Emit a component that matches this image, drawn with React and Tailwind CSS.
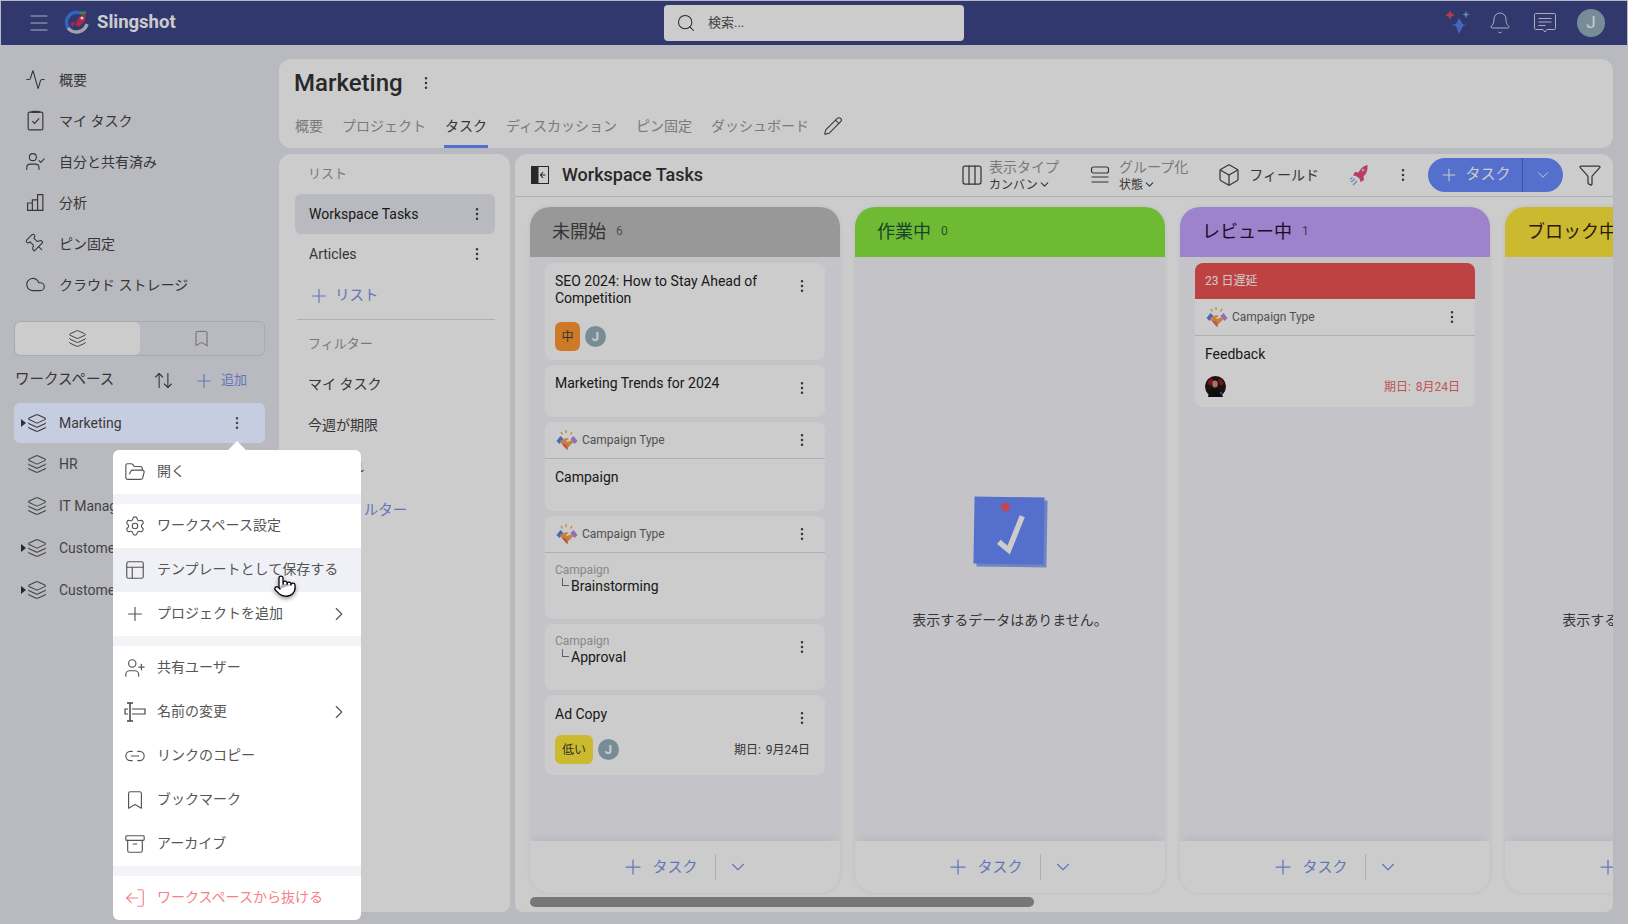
import React from "react";
import {
  Activity, Archive, ArrowUpDown, Bell, Bookmark, Box, ChevronDown, ChevronRight,
  Cloud, Columns3, EllipsisVertical, Filter, FolderOpen, Layers, Link2, LogOut,
  Menu, PanelsTopLeft, Pencil, Pin, Plus, Pointer, Search, Settings, UserCheck, UserPlus,
} from "lucide-react";

const thin = { strokeWidth: 1.25 };

const Logo = () => (
  <svg width="26" height="26" viewBox="0 0 26 26" fill="none">
    <path d="M5 20A10 10 0 0 1 15 3" stroke="#3f7fe8" strokeWidth="3.5" />
    <path d="M15 3l6 0" stroke="#35b26b" strokeWidth="3" />
    <path d="M3 18a11 11 0 0 0 19-4" stroke="#c9ccd6" strokeWidth="3.5" />
    <path d="M10 15l4-8 7-4-1 8-6 6z" fill="#d9335f" />
    <circle cx="17" cy="8" r="1.6" fill="#fff" />
    <path d="M5 14l5-3-2 6z" fill="#d9335f" />
  </svg>
);

const Sparkles = () => (
  <svg width="28" height="26" viewBox="0 0 28 26">
    <path d="M15 8l4 6.5 4 .5-4 1-4 8-3-8-4.5-1 4.500-1z" fill="#5c7de8" />
    <path d="M6 0l1.400 3.600L11 5l-3.600 1.400L6 10 4.600 6.400 1 5l3.600-1.400z" fill="#e24a58" />
    <path d="M22 1l1 2.600 2.600 1-2.600 1-1 2.600-1-2.600-2.600-1 2.600-1z" fill="#6cb1ea" />
  </svg>
);

const ChatIcon = () => (
  <svg width="24" height="22" viewBox="0 0 24 22" fill="none" stroke="currentColor" strokeWidth="1">
    <path d="M2.500 1.500h19a1 1 0 0 1 1 1v14a1 1 0 0 1-1 1h-7.500L12 20l-2-2.500H2.500a1 1 0 0 1-1-1v-14a1 1 0 0 1 1-1z" />
    <path d="M5.500 6.500h13M5.500 10h13M5.500 13.500h7" />
  </svg>
);

const Rocket = () => (
  <svg width="20" height="22" viewBox="0 0 20 22">
    <path d="M18.500 1c.5 5-1 9-4 11.500l.5 3.500-3.500 2-1-3.500-3.500-2.500-3-.5 2-3.500 3.500.5C11 5 14 2 18.500 1z" fill="#e84c82" />
    <circle cx="14" cy="6" r="1.500" fill="#cbcbcb" />
    <path d="M6 15l-4 3M8 17l-4 4M3.500 13.500L1 15.500" stroke="#7fa9ef" strokeWidth="1.200" />
  </svg>
);

const Handshake = () => (
  <svg width="22" height="22" viewBox="0 0 22 22">
    <path d="M10 1v3M5 3l1.500 2.500M16 3l-1.500 2.500" stroke="#f0a93e" strokeWidth="1.300" />
    <path d="M0.500 12l4-5 3 3-4 5z" fill="#5e80e6" />
    <path d="M21.500 12l-4-5-3 3 4 5z" fill="#b48ae8" />
    <path d="M4 12l6-3 3 1-3 2 1 1 5-2 1.500 2-6 6-3-1z" fill="#f7a24d" />
    <path d="M5 14l5 6 2 1-1-5z" fill="#ef6a5e" />
  </svg>
);

const Collapse = () => (
  <svg width="18" height="18" viewBox="0 0 18 18" fill="none">
    <rect x="0.500" y="0.500" width="17" height="17" stroke="#333" />
    <rect x="0.500" y="0.500" width="7" height="17" fill="#333" />
    <path d="M14.500 9H9.500M12 6L9.500 9 12 12" stroke="#333" strokeWidth="1.100" />
  </svg>
);

const RenameIcon = () => (
  <svg width="22" height="20" viewBox="0 0 22 20" fill="none" stroke="#444" strokeWidth="1.200">
    <path d="M6 1v18M3 1h6M3 19h6" strokeWidth="1.500" />
    <path d="M4 7H1v5h3M8 7h13v5H8" />
  </svg>
);

const LeaveIcon = (props) => <LogOut {...props} className="-scale-x-100" />;

const GroupIcon = () => (
  <svg width="20" height="20" viewBox="0 0 20 20" fill="none" stroke="#444" strokeWidth="1.200">
    <rect x="1.500" y="2" width="17" height="6" rx="2" />
    <path d="M1.500 12h17M1.500 17h17" />
  </svg>
);

const ChartIcon = ({ size }) => (
  <svg width={size} height={size} viewBox="0 0 20 20" fill="none" stroke="currentColor" strokeWidth="1.100">
    <path d="M2.500 10.500h4.500v7H2.500zM7 7.500h5v10H7zM12 2.500h5v15h-5z" />
  </svg>
);

const TaskIcon = ({ size }) => (
  <svg width={size} height={size} viewBox="0 0 20 20" fill="none" stroke="currentColor" strokeWidth="1.100">
    <rect x="3" y="2" width="14" height="17" rx="1.500" />
    <path d="M6 1.800h8" strokeWidth="2" />
    <path d="M7 10.500l2.200 2.300L13.500 8" />
  </svg>
);

const PinIcon = (props) => <Pin {...props} className="-rotate-45" />;

const Avatar = ({ small }) => (
  <span
    className={`flex shrink-0 items-center justify-center rounded-full bg-[#96b0be] font-bold text-white ${
      small ? "h-[21px] w-[21px] text-[13px]" : "h-[28px] w-[28px] text-[17px] font-normal"
    }`}
  >
    J
  </span>
);

const Photo = () => (
  <svg width="21" height="21" viewBox="0 0 21 21">
    <circle cx="10.500" cy="10.500" r="10.500" fill="#2a1214" />
    <path d="M2 6l4-4 3 3-4 5zM19 7l-4-5-2 3 3 5z" fill="#8d1f24" />
    <ellipse cx="10" cy="8" rx="2.800" ry="3.500" fill="#c9917c" />
    <path d="M3 21c1-7 4-8 7-8s6 1 8 8z" fill="#111" />
    <circle cx="16" cy="17" r="1" fill="#4f7de0" />
  </svg>
);

const NoteIcon = () => (
  <div className="relative ml-[2px] h-[71px] w-[74px]">
    <div className="absolute left-[3px] top-[3px] h-[67px] w-[70px] rotate-[1deg] bg-[#8ca5f5]" />
    <div className="absolute left-0 top-0 h-[67px] w-[70px] rotate-[1deg] bg-[#6a8cff]">
      <svg width="70" height="67" viewBox="0 0 70 67" fill="none">
        <circle cx="31" cy="10" r="4.500" fill="#f05a6c" />
        <path d="M25 45l10 8 13-34" stroke="#fff" strokeWidth="5.500" />
      </svg>
    </div>
  </div>
);

const navItems = [
  { label: "概要", Icon: Activity },
  { label: "マイ タスク", Icon: TaskIcon },
  { label: "自分と共有済み", Icon: UserCheck },
  { label: "分析", Icon: ChartIcon },
  { label: "ピン固定", Icon: PinIcon },
  { label: "クラウド ストレージ", Icon: Cloud },
];

const workspaces = [
  { name: "HR" },
  { name: "IT Management" },
  { name: "Customer Success", caret: true },
  { name: "Customer Support", caret: true },
];

const tabs = ["概要", "プロジェクト", "タスク", "ディスカッション", "ピン固定", "ダッシュボード"];

const Caret = () => <span className="mr-[1px] h-0 w-0 border-y-[4px] border-l-[5px] border-y-transparent border-l-[#333]" />;

const Dots = ({ className = "" }) => (
  <EllipsisVertical size={16} strokeWidth={1.75} className={`shrink-0 text-[#444] ${className}`} />
);

const Sidebar = () => (
  <aside className="flex w-[278px] shrink-0 flex-col pl-[13px] pr-[14px] pt-[14px]">
    {navItems.map(({ label, Icon }) => (
      <div key={label} className="flex h-[41px] items-center text-sm text-[#444]">
        <span className="flex w-[45px] justify-center pr-[2px]">
          <Icon size={21} {...thin} />
        </span>
        {label}
      </div>
    ))}
    <div className="mt-[16px] flex h-[35px] rounded-md border border-[#d5d6dc]">
      <div className="flex flex-1 items-center justify-center rounded-md bg-white text-[#555]">
        <Layers size={19} {...thin} />
      </div>
      <div className="flex flex-1 items-center justify-center text-[#888]">
        <Bookmark size={19} {...thin} />
      </div>
    </div>
    <div className="mt-[2px] flex h-[45px] items-center text-sm text-[#444]">
      <span className="flex-1 pl-[1px] text-[14.5px]">ワークスペース</span>
      <ArrowUpDown size={21} {...thin} className="mr-[19px]" />
      <span className="flex items-center gap-[6px] pr-[18px] text-[13px] text-[#7c93e8]">
        <Plus size={22} {...thin} />
        追加
      </span>
    </div>
    <div className="relative z-20 flex h-[40px] items-center rounded-md bg-[#c7cde1] pl-[7px] pr-[20px] text-sm text-[#3a3a3a]">
      <Caret />
      <Layers size={20} {...thin} className="mr-[12px]" />
      <span className="flex-1">Marketing</span>
      <Dots />
    </div>
    {workspaces.map((w) => (
      <div key={w.name} className="flex h-[42px] items-center whitespace-nowrap pl-[7px] text-sm text-[#555]">
        {w.caret ? <Caret /> : <span className="w-[6px]" />}
        <Layers size={20} {...thin} className="mr-[12px]" />
        {w.name}
      </div>
    ))}
  </aside>
);

const ListPanel = () => (
  <div className="flex w-[231px] shrink-0 flex-col rounded-t-xl rounded-b-lg bg-white pl-[16px] pr-[15px] text-[13px] text-[#333]">
    <div className="flex h-[40px] items-center pl-[13px] text-[#999]">リスト</div>
    <div className="flex h-[40px] items-center justify-between rounded-md bg-[#e8e9ef] pl-[14px] pr-[10px] text-sm text-[#222]">
      Workspace Tasks
      <Dots />
    </div>
    <div className="flex h-[40px] items-center justify-between pl-[14px] pr-[10px] text-sm text-[#444]">
      Articles
      <Dots />
    </div>
    <div className="flex h-[44px] items-center gap-[5px] pl-[13px] text-[14.5px] text-[#7c93e8]">
      <Plus size={22} {...thin} />
      リスト
    </div>
    <div className="ml-[2px] mt-[1px] h-px bg-[#dcdde2]" />
    <div className="mt-[4px] flex h-[39px] items-center pl-[13px] text-[#999]">フィルター</div>
    <div className="flex h-[41px] items-center pl-[13px] text-sm text-[#444]">マイ タスク</div>
    <div className="flex h-[41px] items-center pl-[13px] text-sm text-[#444]">今週が期限</div>
    <div className="flex h-[41px] items-center pl-[13px] text-sm text-[#444]">期限切れ</div>
    <div className="flex h-[49px] items-center gap-[5px] pl-[13px] text-[14.5px] text-[#7c93e8]">
      <Plus size={22} {...thin} />
      フィルター
    </div>
  </div>
);

const CardType = () => (
  <div className="flex h-[37px] items-center border-b border-[#dcdde2] pl-[11px] pr-[15px] text-xs text-[#666]">
    <Handshake />
    <span className="ml-[4px] flex-1">Campaign Type</span>
    <Dots />
  </div>
);

const SubTitle = ({ name }) => (
  <div className="leading-[15px]">
    <div className="text-xs text-[#aaa]">Campaign</div>
    <div className="flex text-sm leading-[17px] text-[#222]">
      <span className="ml-[7px] mr-[2px] h-[8px] w-[7px] border-b border-l border-[#777]" />
      {name}
    </div>
  </div>
);

const Chip = ({ className, children }) => (
  <span className={`flex h-[29px] items-center justify-center rounded-md text-xs text-[#443] ${className}`}>{children}</span>
);

const FirstColumn = () => (
  <>
    <div className="flex h-[97px] flex-col rounded-lg bg-white pl-[10px] pr-[15px] pt-[10px]">
      <div className="flex text-sm leading-[17px] text-[#222]">
        <div className="flex-1">SEO 2024: How to Stay Ahead of Competition</div>
        <Dots className="mt-[5px]" />
      </div>
      <div className="mt-[15px] flex items-center gap-[5px]">
        <Chip className="w-[25px] bg-[#ff9832]">中</Chip>
        <Avatar small />
      </div>
    </div>
    <div className="flex h-[52px] rounded-lg bg-white pl-[10px] pr-[15px] pt-[10px] text-sm leading-[17px] text-[#222]">
      <div className="flex-1">Marketing Trends for 2024</div>
      <Dots className="mt-[5px]" />
    </div>
    <div className="h-[89px] rounded-lg bg-white">
      <CardType />
      <div className="pl-[10px] pt-[10px] text-sm leading-[17px] text-[#222]">Campaign</div>
    </div>
    <div className="h-[103px] rounded-lg bg-white">
      <CardType />
      <div className="pl-[10px] pt-[9px]">
        <SubTitle name="Brainstorming" />
      </div>
    </div>
    <div className="flex h-[66px] rounded-lg bg-white pl-[10px] pr-[15px] pt-[9px]">
      <div className="flex-1">
        <SubTitle name="Approval" />
      </div>
      <Dots className="mt-[6px]" />
    </div>
    <div className="flex h-[80px] flex-col rounded-lg bg-white pl-[10px] pr-[15px] pt-[11px]">
      <div className="flex text-sm leading-[17px] text-[#222]">
        <div className="flex-1">Ad Copy</div>
        <Dots className="mt-[4px]" />
      </div>
      <div className="mt-[9px] flex items-center gap-[5px]">
        <Chip className="w-[38px] bg-[#fee83b]">低い</Chip>
        <Avatar small />
        <span className="ml-auto text-xs text-[#444] [word-spacing:2px]">期日: 9月24日</span>
      </div>
    </div>
  </>
);

const ReviewColumn = () => (
  <div className="h-[144px] overflow-hidden rounded-lg bg-white">
    <div className="flex h-[36px] items-center bg-[#ef5353] pl-[10px] text-xs text-white">23 日遅延</div>
    <CardType />
    <div className="pl-[10px] pt-[10px] text-sm leading-[17px] text-[#222]">Feedback</div>
    <div className="mt-[13px] flex items-center justify-between pl-[10px] pr-[15px] text-xs text-[#ef6a6a]">
      <Photo />
      <span className="[word-spacing:2px]">期日: 8月24日</span>
    </div>
  </div>
);

const Empty = () => (
  <div className="flex flex-1 flex-col items-center pt-[234px]">
    <NoteIcon />
    <div className="mt-[42px] whitespace-nowrap text-sm text-[#444]">表示するデータはありません。</div>
  </div>
);

const Column = ({ title, count, head, titleColor, countColor, children }) => (
  <div className="flex h-[686px] w-[310px] shrink-0 flex-col overflow-hidden rounded-[20px] bg-[#f5f6fa] shadow-[0_0_4px_rgba(0,0,0,0.08)]">
    <div className={`flex h-[50px] shrink-0 items-center gap-[10px] pb-[2px] pl-[22px] text-[18px] ${head} ${titleColor}`}>
      <span className="whitespace-nowrap">{title}</span>
      <span className={`text-xs ${countColor}`}>{count}</span>
    </div>
    <div className="flex flex-1 flex-col gap-[5px] px-[15px] pt-[6px]">{children}</div>
    <div className="flex h-[52px] shrink-0 items-center justify-center bg-white text-[15px] text-[#7c93e8] shadow-[0_-6px_10px_-4px_rgba(0,0,0,0.08)]">
      <Plus size={24} {...thin} />
      <span className="ml-[7px] pr-[17px]">タスク</span>
      <span className="h-[26px] w-px bg-[#dcdde2]" />
      <ChevronDown size={22} {...thin} className="ml-[11px]" />
    </div>
  </div>
);

const Board = () => (
  <div className="flex min-w-0 flex-1 flex-col overflow-hidden rounded-t-xl rounded-b-lg bg-white">
    <div className="flex h-[43px] shrink-0 items-center border-b border-[#dcdde2] pl-[16px] pr-[11px] text-sm text-[#444]">
      <Collapse />
      <span className="ml-[13px] text-[18px] font-medium text-[#333]">Workspace Tasks</span>
      <Columns3 size={24} {...thin} className="ml-auto" />
      <div className="ml-[5px] flex flex-col leading-[19px]">
        <span className="text-[#999]">表示タイプ</span>
        <span className="flex items-center text-xs">
          カンバン <ChevronDown size={13} />
        </span>
      </div>
      <span className="ml-[31px]">
        <GroupIcon />
      </span>
      <div className="ml-[9px] flex flex-col leading-[19px]">
        <span className="text-[#999]">グループ化</span>
        <span className="flex items-center text-xs">
          状態 <ChevronDown size={13} />
        </span>
      </div>
      <Box size={24} {...thin} className="ml-[29px]" />
      <span className="ml-[8px]">フィールド</span>
      <span className="ml-[30px]">
        <Rocket />
      </span>
      <Dots className="ml-[26px]" />
      <div className="ml-[17px] flex h-[34px] w-[135px] items-center rounded-full bg-[#6a8cff] text-[15px] text-white">
        <span className="flex flex-1 items-center justify-center gap-[6px]">
          <Plus size={20} {...thin} />
          タスク
        </span>
        <span className="flex h-full w-[41px] items-center justify-center border-l border-[#4a68d4]">
          <ChevronDown size={18} {...thin} />
        </span>
      </div>
      <Filter size={24} {...thin} className="ml-[15px]" />
    </div>
    <div className="flex min-h-0 flex-1 gap-[15px] overflow-hidden px-[15px] pb-[4px] pt-[10px]">
      <Column title="未開始" count="6" head="bg-[#bfbfbf]" titleColor="text-[#444]" countColor="text-[#666]">
        <FirstColumn />
      </Column>
      <Column title="作業中" count="0" head="bg-[#8aea40]" titleColor="text-[#253]" countColor="text-[#363]">
        <Empty />
      </Column>
      <Column title="レビュー中" count="1" head="bg-[#c4a4ff]" titleColor="text-[#213]" countColor="text-[#546]">
        <ReviewColumn />
      </Column>
      <Column title="ブロック中" count="0" head="bg-[#fee83b]" titleColor="text-[#321]" countColor="text-[#654]">
        <Empty />
      </Column>
    </div>
    <div className="shrink-0 px-[15px] pb-[5px]">
      <div className="h-[10px] w-[504px] rounded-full bg-[#959595]" />
    </div>
  </div>
);

const menuGroups = [
  [{ label: "開く", Icon: FolderOpen }],
  [
    { label: "ワークスペース設定", Icon: Settings },
    { label: "テンプレートとして保存する", Icon: PanelsTopLeft, hover: true },
    { label: "プロジェクトを追加", Icon: Plus, more: true },
  ],
  [
    { label: "共有ユーザー", Icon: UserPlus },
    { label: "名前の変更", Icon: RenameIcon, more: true },
    { label: "リンクのコピー", Icon: Link2 },
    { label: "ブックマーク", Icon: Bookmark },
    { label: "アーカイブ", Icon: Archive },
  ],
  [{ label: "ワークスペースから抜ける", Icon: LeaveIcon, danger: true }],
];

const ContextMenu = () => (
  <div className="absolute left-[113px] top-[450px] z-20 w-[248px] rounded-md bg-white text-sm text-[#555]">
    <span className="absolute left-[117px] top-[-6px] h-[14px] w-[14px] rotate-45 bg-white" />
    {menuGroups.map((group, i) => (
      <div key={i} className={`relative ${i > 0 ? "border-t-[10px] border-[#f3f4f8]" : ""}`}>
        {group.map(({ label, Icon, hover, more, danger }) => (
          <div
            key={label}
            className={`flex h-[44px] items-center pl-[11px] pr-[11px] ${hover ? "bg-[#f0f1f6]" : ""} ${
              danger ? "text-[#f77f86]" : ""
            }`}
          >
            <span className="mr-[11px] flex w-[22px] justify-center">
              <Icon size={22} {...thin} />
            </span>
            <span className="flex-1 pb-[2px]">{label}</span>
            {more && <ChevronRight size={22} {...thin} />}
          </div>
        ))}
      </div>
    ))}
  </div>
);

export default function App() {
  return (
    <div className="relative h-[924px] w-[1628px] overflow-hidden bg-[#e8e9ef] px-px pt-px font-['Roboto','Noto_Sans_CJK_JP',sans-serif]">
      <header className="flex h-[44px] items-center bg-[#3c478a] text-white">
        <div className="flex w-[663px] items-center pl-[26px]">
          <Menu size={24} strokeWidth={1} className="opacity-80" />
          <span className="ml-[14px]">
            <Logo />
          </span>
          <span className="ml-[6px] text-[18.5px] font-bold">Slingshot</span>
        </div>
        <div className="flex h-[36px] w-[300px] items-center rounded bg-white pl-[12px] text-[13px] text-[#555]">
          <Search size={20} {...thin} className="text-[#333]" />
          <span className="ml-[12px]">検索...</span>
        </div>
        <div className="flex flex-1 items-center justify-end pr-[22px]">
          <Sparkles />
          <Bell size={24} strokeWidth={1} className="ml-[16px] opacity-80" />
          <span className="ml-[21px] opacity-80">
            <ChatIcon />
          </span>
          <span className="ml-[20px]">
            <Avatar />
          </span>
        </div>
      </header>
      <div className="flex h-[879px]">
        <Sidebar />
        <main className="flex min-w-0 flex-1 flex-col gap-[6px] pb-[12px] pr-[14px] pt-[14px]">
          <section className="h-[89px] shrink-0 rounded-xl bg-white pl-[15px]">
            <div className="flex h-[50px] items-center pb-[2px]">
              <span className="text-[24px] font-medium text-[#333]">Marketing</span>
              <Dots className="ml-[15px]" />
            </div>
            <div className="flex h-[39px] items-start text-sm text-[#999]">
              {tabs.map((t) => (
                <span
                  key={t}
                  className={`mr-[17px] flex h-[39px] items-center px-[1px] ${
                    t === "タスク" ? "border-b-[3px] border-[#6a8cff] pb-[3px] text-[#444]" : "pb-[6px]"
                  }`}
                >
                  {t}
                </span>
              ))}
              <Pencil size={20} {...thin} className="-ml-[4px] mt-[7px] text-[#444]" />
            </div>
          </section>
          <div className="flex min-h-0 flex-1 gap-[5px]">
            <ListPanel />
            <Board />
          </div>
        </main>
      </div>
      <div className="absolute inset-0 z-10 bg-black/20" />
      <ContextMenu />
      <Pointer size={24} strokeWidth={1.25} fill="white" className="absolute left-[273px] top-[574px] z-30 text-black drop-shadow-[0_2px_2px_rgba(0,0,0,0.4)]" />
    </div>
  );
}
